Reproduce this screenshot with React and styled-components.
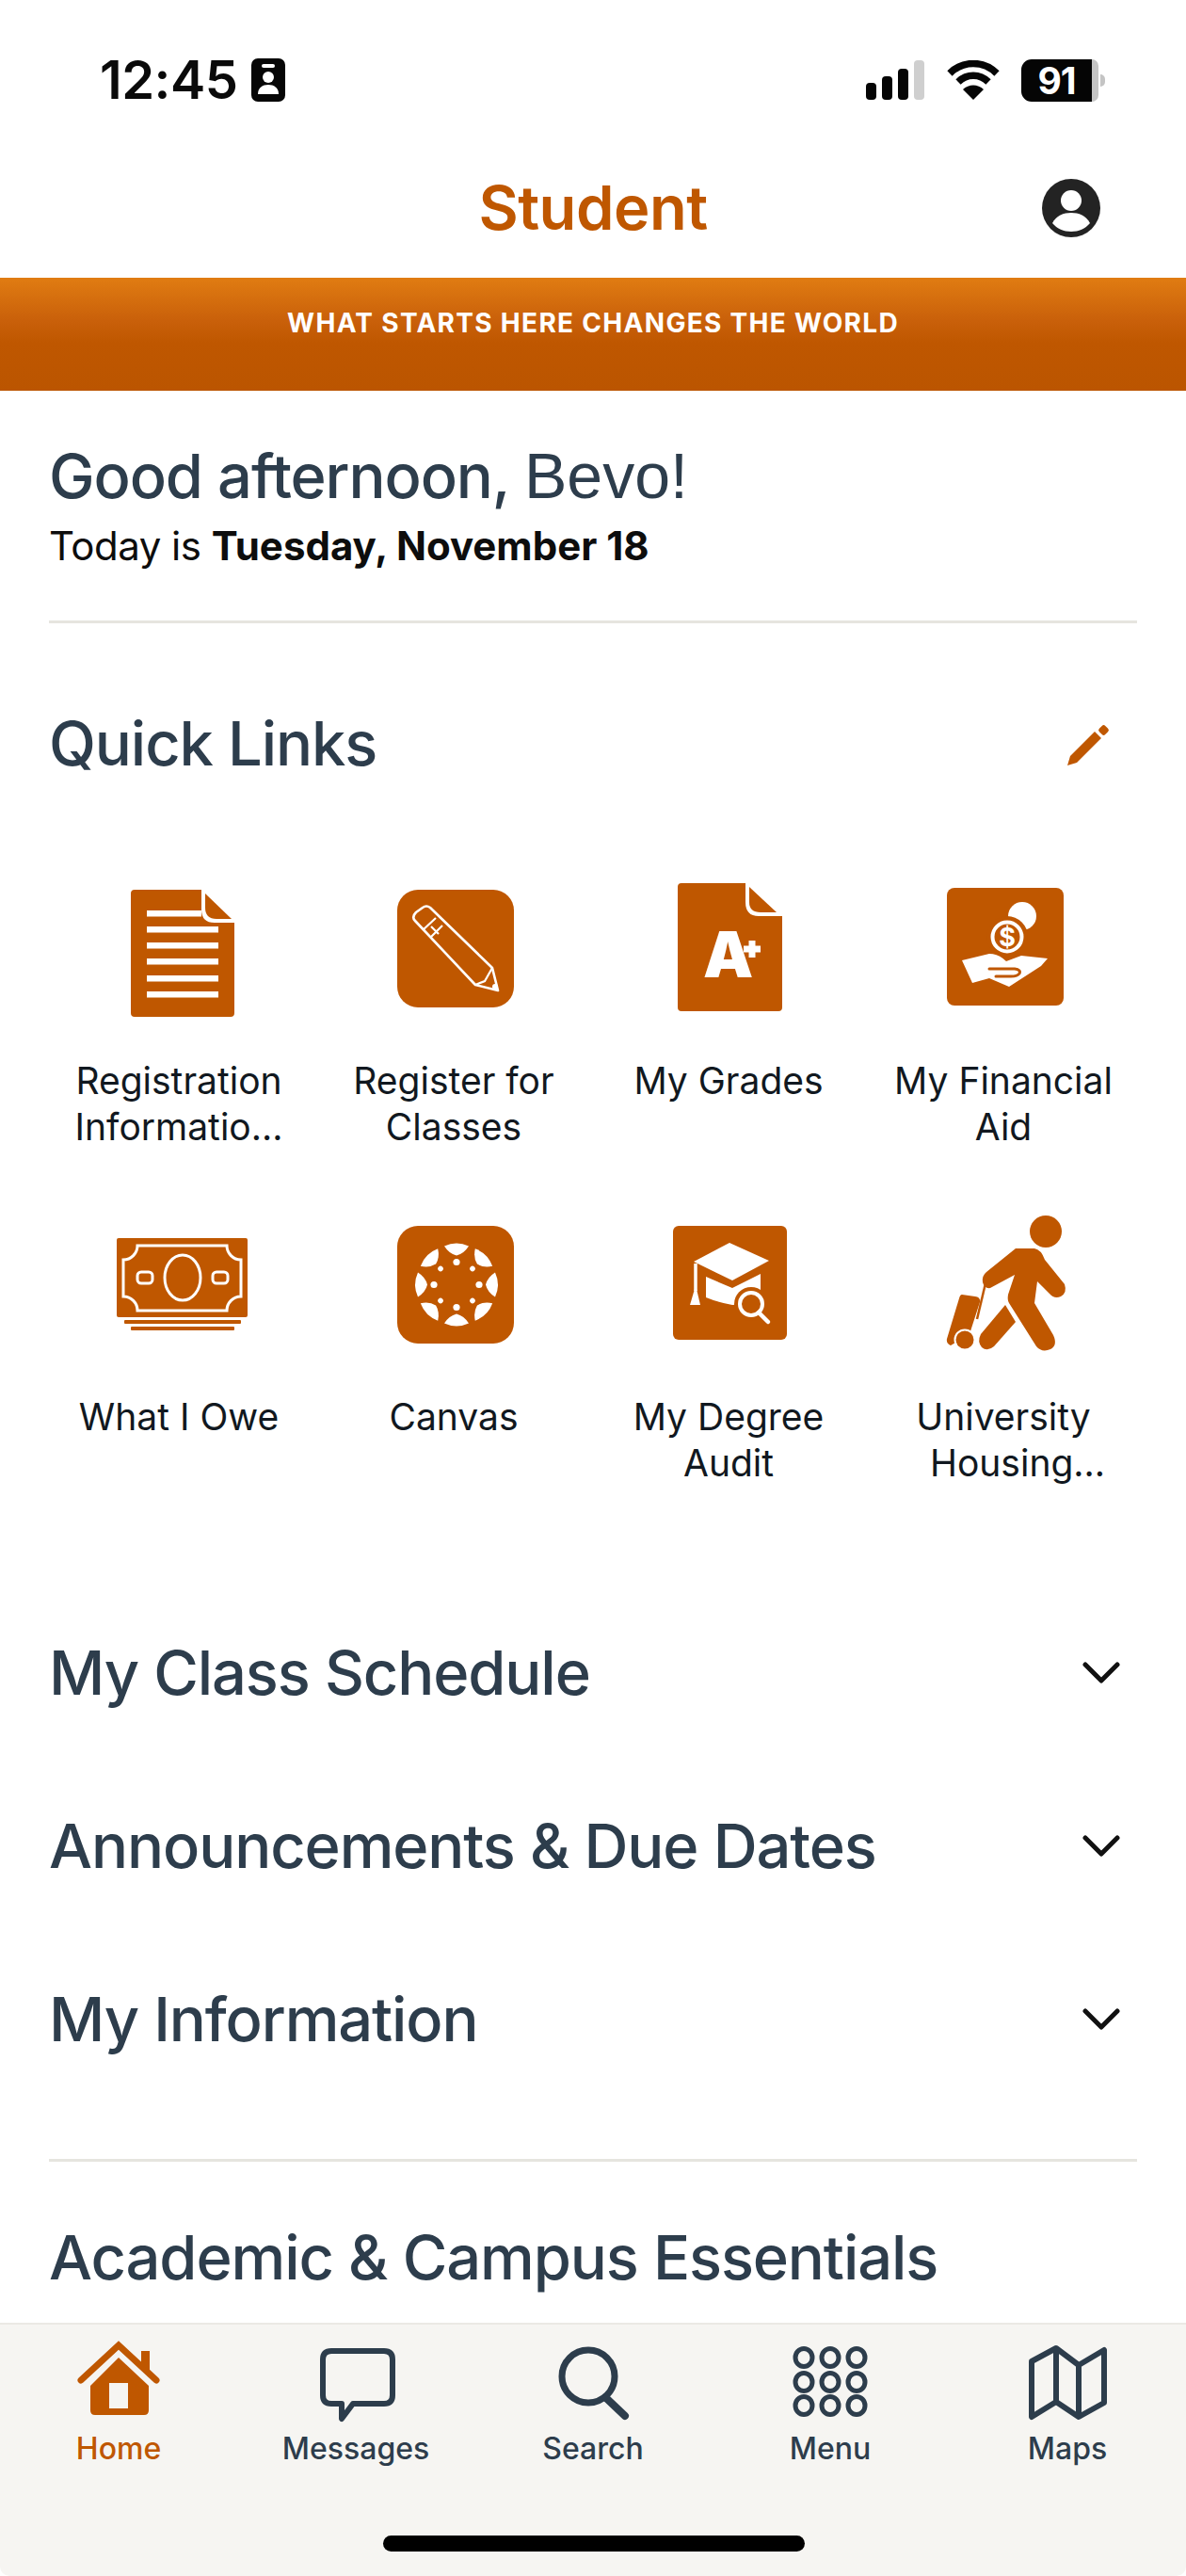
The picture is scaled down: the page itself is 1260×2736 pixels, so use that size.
import React from "react";
import styled, { createGlobalStyle } from "styled-components";

const ORANGE = "#bf5700";
const SLATE = "#2d3d4c";

const GlobalStyle = createGlobalStyle`
  html, body {
    margin: 0;
    padding: 0;
    background: #fff;
  }
  * {
    box-sizing: border-box;
  }
`;

const Screen = styled.div`
  width: 1260px;
  height: 2736px;
  display: flex;
  flex-direction: column;
  overflow: hidden;
  background: #fff;
  font-family: Inter, "Liberation Sans", sans-serif;
`;

const StatusBar = styled.div`
  height: 170px;
  flex: none;
  display: flex;
  align-items: center;
  justify-content: space-between;
  padding: 0 86px 0 106px;
`;

const StatusGroup = styled.div`
  display: flex;
  align-items: center;
`;

const Time = styled.span`
  font-size: 56px;
  font-weight: 600;
  color: #0a0a0a;
  letter-spacing: -0.5px;
  margin-right: 15px;
`;

const WifiSlot = styled.div`
  display: flex;
  margin: 0 23px 0 24px;
`;

const Battery = styled.div`
  width: 75px;
  height: 45px;
  border-radius: 11px 0 0 11px;
  background: #050505;
  color: #fff;
  font-size: 39px;
  font-weight: 700;
  display: flex;
  align-items: center;
  justify-content: center;
  letter-spacing: -1px;
`;

const BatteryEnd = styled.div`
  width: 7px;
  height: 45px;
  border-radius: 0 8px 8px 0;
  background: #c4c4c4;
`;

const BatteryNub = styled.div`
  width: 5px;
  height: 13px;
  margin-left: 2px;
  border-radius: 0 6px 6px 0;
  background: #c4c4c4;
`;

const Header = styled.header`
  height: 125px;
  flex: none;
  display: grid;
  grid-template-columns: 1fr auto 1fr;
  align-items: center;
  padding: 0 91px 24px;
`;

const HeaderTitle = styled.h1`
  grid-column: 2;
  margin: 0;
  font-size: 65px;
  font-weight: 600;
  color: ${ORANGE};
  letter-spacing: -0.5px;
`;

const ProfileSlot = styled.div`
  display: flex;
  justify-content: flex-end;
`;

const Banner = styled.div`
  height: 120px;
  flex: none;
  padding-top: 30px;
  text-align: center;
  background: linear-gradient(180deg, #e07c12 0%, #c9600a 38%, #bf5700 58%, #bb5500 100%);
  color: #fff;
  font-size: 28px;
  font-weight: 700;
  letter-spacing: 1.3px;
  line-height: 36px;
`;

const Content = styled.main`
  flex: 1;
  min-height: 0;
  overflow: hidden;
  padding: 0 52px;
`;

const Greeting = styled.h2`
  margin: 0;
  padding-top: 48px;
  font-size: 65px;
  line-height: 84px;
  font-weight: 450;
  color: ${SLATE};
  letter-spacing: -1.1px;
`;

const GreetingName = styled.span`
  font-family: "Liberation Sans", sans-serif;
  font-weight: 400;
  font-size: 68px;
  letter-spacing: 0;
`;

const TodayLine = styled.p`
  margin: 7px 0 0;
  font-size: 42px;
  line-height: 50px;
  color: #0d0d0d;
  letter-spacing: -0.5px;

  b {
    font-weight: 700;
    letter-spacing: 0;
  }
`;

const Divider = styled.hr`
  margin: 0;
  border: 0;
  height: 3px;
  background: #e6e5df;
`;

const GreetingDivider = styled(Divider)`
  margin-top: 54px;
`;

const SectionHead = styled.div`
  display: flex;
  align-items: center;
  justify-content: space-between;
  padding-right: 28px;
  margin-top: 86px;
`;

const SectionTitle = styled.h3`
  margin: 0;
  font-size: 65px;
  line-height: 84px;
  font-weight: 450;
  color: ${SLATE};
  letter-spacing: -1.1px;
`;

const LinkGrid = styled.div`
  display: grid;
  grid-template-columns: repeat(4, 292px);
  margin: 104px 0 0 -8px;
  row-gap: 72px;
`;

const LinkCell = styled.div`
  display: flex;
  flex-direction: column;
  align-items: center;
  height: 285px;
`;

const LinkIcon = styled.svg`
  width: 160px;
  height: 150px;
  flex: none;
  display: block;
  overflow: visible;
`;

const LinkLabel = styled.div`
  margin-top: 37px;
  text-align: center;
  font-size: 39px;
  line-height: 49px;
  color: #111820;
`;

const LabelLine = styled.div`
  padding-left: ${(p) => p.$shift || 0}px;
  white-space: nowrap;
`;

const Accordion = styled.div`
  margin-top: 107px;
`;

const AccordionRow = styled.div`
  height: 184px;
  display: flex;
  align-items: center;
  justify-content: space-between;
  padding-right: 18px;
`;

const EssentialsDivider = styled(Divider)`
  margin-top: 56px;
`;

const EssentialsTitle = styled(SectionTitle)`
  margin-top: 60px;
`;

const TabBar = styled.nav`
  height: 269px;
  flex: none;
  display: grid;
  grid-template-columns: repeat(5, 1fr);
  align-content: start;
  position: relative;
  padding-top: 15px;
  background: #f6f5f2;
  border-top: 2px solid #ebe9e4;
  border-radius: 0 0 10px 10px;
`;

const Tab = styled.div`
  display: flex;
  flex-direction: column;
  align-items: center;
  color: ${(p) => (p.$active ? ORANGE : SLATE)};
`;

const TabIcon = styled.svg`
  width: 100px;
  height: 90px;
  display: block;
`;

const TabLabel = styled.span`
  margin-top: 6px;
  font-size: 32px;
  line-height: 42px;
  font-weight: 500;
`;

const HomeIndicator = styled.div`
  position: absolute;
  left: 407px;
  bottom: 26px;
  width: 448px;
  height: 17px;
  border-radius: 9px;
  background: #000;
`;

const CardId = () => (
  <svg width="36" height="46" viewBox="0 0 36 46">
    <rect width="36" height="46" rx="7" fill="#060606" />
    <rect x="11" y="6" width="14" height="4" rx="2" fill="#fff" />
    <circle cx="18" cy="20" r="6" fill="#fff" />
    <path d="M7 38c0-7 5-10 11-10s11 3 11 10z" fill="#fff" />
  </svg>
);

const SignalBars = () => (
  <svg width="62" height="42" viewBox="0 0 62 42">
    <rect x="0" y="24" width="11" height="18" rx="4" fill="#050505" />
    <rect x="17" y="17" width="11" height="25" rx="4" fill="#050505" />
    <rect x="34" y="9" width="11" height="33" rx="4" fill="#050505" />
    <rect x="51" y="0" width="11" height="42" rx="4" fill="#cfcfcf" />
  </svg>
);

const WifiGlyph = () => (
  <svg width="56" height="42" viewBox="0 0 56 42">
    <path d="M3 14C17 0 39 0 53 14" fill="none" stroke="#050505" strokeWidth="7.5" />
    <path d="M12 23C21 14 35 14 44 23" fill="none" stroke="#050505" strokeWidth="7.5" />
    <path d="M28 42L17 31C23 25 33 25 39 31z" fill="#050505" />
  </svg>
);

const ProfileIcon = () => (
  <svg width="62" height="62" viewBox="0 0 62 62">
    <circle cx="31" cy="31" r="31" fill="#232323" />
    <circle cx="31" cy="23" r="11" fill="#fff" />
    <path d="M11 47c4-8 12-11 20-11s16 3 20 11c-5 6-12 9-20 9s-15-3-20-9z" fill="#fff" />
  </svg>
);

const EditIcon = () => (
  <svg width="50" height="50" viewBox="0 0 50 50">
    <path d="M4 48L7 38L33 12L40 19L14 45Z" fill={ORANGE} />
    <rect x="38" y="6" width="9" height="9" rx="2.5" transform="rotate(45 42.5 10.5)" fill={ORANGE} />
  </svg>
);

const Chevron = () => (
  <svg width="40" height="24" viewBox="0 0 40 24">
    <path d="M3 3l17 17L37 3" fill="none" stroke="#111" strokeWidth="5" strokeLinecap="round" strokeLinejoin="round" />
  </svg>
);

const DocIcon = () => (
  <>
    <path d="M33 9H104V30Q104 44 118 44H139V140Q139 144 135 144H33Q29 144 29 140V13Q29 9 33 9Z" fill={ORANGE} />
    <path d="M108 13L136 40H120Q108 40 108 28Z" fill={ORANGE} />
    <g fill="#fff">
      <rect x="46" y="31" width="58" height="6.5" />
      <rect x="46" y="48" width="76" height="6.5" />
      <rect x="46" y="65" width="76" height="6.5" />
      <rect x="46" y="82" width="76" height="6.5" />
      <rect x="46" y="100" width="76" height="6.5" />
      <rect x="46" y="117" width="76" height="6.5" />
    </g>
  </>
);

const PencilIcon = () => (
  <>
    <rect x="20" y="9" width="124" height="125" rx="22" fill={ORANGE} />
    <path
      d="M39 42Q35 38 40 33L47 28Q51 25 55 28L121 92L127 116L103 110Z"
      fill="none"
      stroke="#fff"
      strokeWidth="2.6"
      strokeLinejoin="round"
    />
    <path d="M47 52L61 39M55 60L68 47M56 48L64 56M103 110L113 106L121 92" fill="none" stroke="#fff" strokeWidth="2.2" />
    <circle cx="124" cy="112" r="3" fill="#fff" />
  </>
);

const GradesIcon = () => (
  <>
    <path d="M30 2H98V22Q98 37 112 37H137V134Q137 138 133 138H30Q26 138 26 134V6Q26 2 30 2Z" fill={ORANGE} />
    <path d="M102 6L131 33H114Q102 33 102 22Z" fill={ORANGE} />
    <text x="53" y="102" fontFamily="Inter, sans-serif" fontWeight="900" fontSize="67" fill="#fff">
      A
    </text>
    <rect x="96" y="68.5" width="18" height="7" fill="#fff" />
    <rect x="101.5" y="63" width="7" height="18" fill="#fff" />
  </>
);

const AidIcon = () => (
  <>
    <rect x="20" y="7" width="124" height="125" rx="8" fill={ORANGE} />
    <circle cx="100" cy="37" r="15" fill="#fff" />
    <circle cx="84" cy="59" r="22" fill={ORANGE} />
    <circle cx="84" cy="59" r="15.5" fill={ORANGE} stroke="#fff" strokeWidth="4" />
    <text x="84" y="69" textAnchor="middle" fontFamily="Inter, sans-serif" fontWeight="700" fontSize="27" fill="#fff">
      $
    </text>
    <path d="M36 84L65 77Q75 77 83 85L99 79L127 82L120 90L86 112L65 103L47 108Z" fill="#fff" strokeLinejoin="round" />
    <path d="M65 93H92Q99 94 97 98Q95 101 88 101H72" fill="none" stroke={ORANGE} strokeWidth="3" strokeLinecap="round" />
  </>
);

const MoneyIcon = () => (
  <>
    <rect x="14" y="26" width="139" height="84" rx="2" fill={ORANGE} />
    <path
      d="M36 34H131A15 15 0 0 0 146 49V88A15 15 0 0 0 131 103H36A15 15 0 0 0 21 88V49A15 15 0 0 0 36 34Z"
      fill="none"
      stroke="#fff"
      strokeWidth="3"
    />
    <ellipse cx="84" cy="68" rx="19" ry="24" fill="none" stroke="#fff" strokeWidth="3" />
    <rect x="36" y="62" width="16" height="12" rx="4" fill="none" stroke="#fff" strokeWidth="3" />
    <rect x="116" y="62" width="16" height="12" rx="4" fill="none" stroke="#fff" strokeWidth="3" />
    <rect x="22" y="113" width="124" height="4" rx="1" fill={ORANGE} />
    <rect x="29" y="120" width="110" height="4" rx="1" fill={ORANGE} />
  </>
);

const CanvasIcon = () => (
  <>
    <rect x="20" y="13" width="124" height="125" rx="22" fill={ORANGE} />
    <g transform="translate(83 75.5)" fill="#fff">
      {[0, 45, 90, 135, 180, 225, 270, 315].map((deg) => (
        <g key={deg} transform={`rotate(${deg})`}>
          <path d="M-13 -41Q0 -47 13 -41Q8 -33 0 -31Q-8 -33 -13 -41Z" />
          <circle cx="0" cy="-24" r={deg % 90 === 0 ? 3.6 : 2.8} />
        </g>
      ))}
    </g>
  </>
);

const DegreeIcon = () => (
  <>
    <rect x="21" y="13" width="121" height="121" rx="6" fill={ORANGE} />
    <path d="M81 31L123 50L84 71L43 51Z" fill="#fff" />
    <path d="M56 67L84 79L114 64V88L100 96L84 97Q68 94 56 89Z" fill="#fff" />
    <path d="M45 53V82" stroke="#fff" strokeWidth="3.5" />
    <path d="M39 97L50 97L46 80H44Z" fill="#fff" />
    <circle cx="104" cy="96" r="18" fill={ORANGE} />
    <circle cx="104" cy="96" r="12" fill="none" stroke="#fff" strokeWidth="4" />
    <path d="M112 105L122 115" stroke="#fff" strokeWidth="4.5" strokeLinecap="round" />
  </>
);

const HousingIcon = () => (
  <>
    <circle cx="125" cy="19" r="17" fill={ORANGE} />
    <path
      d="M93 37L113 37Q120 38 124 49L145 75Q148 84 141 88Q134 91 129 85L116 72L113 95L133 129Q138 140 130 144Q121 148 115 141L86 95Q84 92 85 86L92 65L66 79Q60 80 58 73Q57 66 62 62Z"
      fill={ORANGE}
    />
    <path d="M82 97L93 115L70 141Q63 147 57 142Q52 136 56 128Z" fill={ORANGE} />
    <path d="M61 74L52 112" stroke={ORANGE} strokeWidth="2.5" />
    <path d="M36 86L50 88Q56 89 55 94L44 128L24 140Q19 138 20 133L33 90Q34 86 36 86Z" fill={ORANGE} />
    <circle cx="39" cy="134" r="10.5" fill={ORANGE} stroke="#fff" strokeWidth="2" />
  </>
);

const HomeGlyph = () => (
  <>
    <path d="M10 44L50 7L90 44" fill="none" stroke={ORANGE} strokeWidth="7" strokeLinecap="round" />
    <rect x="74" y="13" width="9" height="20" fill={ORANGE} />
    <path d="M50 20L20 50V76Q20 81 25 81H77Q82 81 82 76V50Z" fill={ORANGE} />
    <rect x="40" y="47" width="20" height="27" fill="#f6f5f2" />
  </>
);

const MessagesGlyph = () => (
  <path
    d="M24 13H80Q89 13 89 22V60Q89 69 80 69H47L35 85V69H24Q15 69 15 60V22Q15 13 24 13Z"
    fill="none"
    stroke={SLATE}
    strokeWidth="6"
    strokeLinejoin="round"
  />
);

const SearchGlyph = () => (
  <>
    <circle cx="45" cy="40" r="28" fill="none" stroke={SLATE} strokeWidth="7" />
    <path d="M64 63L84 82" stroke={SLATE} strokeWidth="8" strokeLinecap="round" />
  </>
);

const MenuGlyph = () => (
  <g fill="none" stroke={SLATE} strokeWidth="5">
    {[22, 50, 78].map((x) =>
      [20, 46, 71].map((y) => <ellipse key={`${x}-${y}`} cx={x} cy={y} rx="9" ry="9.5" />)
    )}
  </g>
);

const MapsGlyph = () => (
  <path
    d="M12 24L38 10L62 28L89 12V68L62 83L38 67L12 83ZM38 10V67M62 28V83"
    fill="none"
    stroke={SLATE}
    strokeWidth="6"
    strokeLinejoin="round"
  />
);

const links = [
  { lines: ["Registration", "Informatio..."], Icon: DocIcon },
  { lines: ["Register for", "Classes"], Icon: PencilIcon },
  { lines: ["My Grades"], Icon: GradesIcon },
  { lines: ["My Financial", "Aid"], Icon: AidIcon },
  { lines: ["What I Owe"], Icon: MoneyIcon, secondRow: true },
  { lines: ["Canvas"], Icon: CanvasIcon, secondRow: true },
  { lines: ["My Degree", "Audit"], Icon: DegreeIcon, secondRow: true },
  { lines: ["University", "Housing..."], shift: 30, Icon: HousingIcon, secondRow: true },
];

const sections = ["My Class Schedule", "Announcements & Due Dates", "My Information"];

const tabs = [
  { label: "Home", Glyph: HomeGlyph, active: true },
  { label: "Messages", Glyph: MessagesGlyph },
  { label: "Search", Glyph: SearchGlyph },
  { label: "Menu", Glyph: MenuGlyph },
  { label: "Maps", Glyph: MapsGlyph },
];

const App = () => (
  <Screen>
    <GlobalStyle />
    <StatusBar>
      <StatusGroup>
        <Time>12:45</Time>
        <CardId />
      </StatusGroup>
      <StatusGroup>
        <SignalBars />
        <WifiSlot>
          <WifiGlyph />
        </WifiSlot>
        <Battery>91</Battery>
        <BatteryEnd />
        <BatteryNub />
      </StatusGroup>
    </StatusBar>

    <Header>
      <HeaderTitle>Student</HeaderTitle>
      <ProfileSlot>
        <ProfileIcon />
      </ProfileSlot>
    </Header>

    <Banner>WHAT STARTS HERE CHANGES THE WORLD</Banner>

    <Content>
      <Greeting>
        Good afternoon, <GreetingName>Bevo!</GreetingName>
      </Greeting>
      <TodayLine>
        Today is <b>Tuesday, November 18</b>
      </TodayLine>
      <GreetingDivider />

      <SectionHead>
        <SectionTitle>Quick Links</SectionTitle>
        <EditIcon />
      </SectionHead>

      <LinkGrid>
        {links.map(({ lines, shift, Icon, secondRow }) => (
          <LinkCell key={lines[0]}>
            <LinkIcon viewBox={secondRow ? "0 4 160 150" : "0 0 160 150"}>
              <Icon />
            </LinkIcon>
            <LinkLabel>
              {lines.map((line, i) => (
                <LabelLine key={line} $shift={i === 1 ? shift : 0}>
                  {line}
                </LabelLine>
              ))}
            </LinkLabel>
          </LinkCell>
        ))}
      </LinkGrid>

      <Accordion>
        {sections.map((title) => (
          <AccordionRow key={title}>
            <SectionTitle>{title}</SectionTitle>
            <Chevron />
          </AccordionRow>
        ))}
      </Accordion>

      <EssentialsDivider />
      <EssentialsTitle>Academic &amp; Campus Essentials</EssentialsTitle>
    </Content>

    <TabBar>
      {tabs.map(({ label, Glyph, active }) => (
        <Tab key={label} $active={active}>
          <TabIcon viewBox="0 0 100 90">
            <Glyph />
          </TabIcon>
          <TabLabel>{label}</TabLabel>
        </Tab>
      ))}
      <HomeIndicator />
    </TabBar>
  </Screen>
);

export default App;
